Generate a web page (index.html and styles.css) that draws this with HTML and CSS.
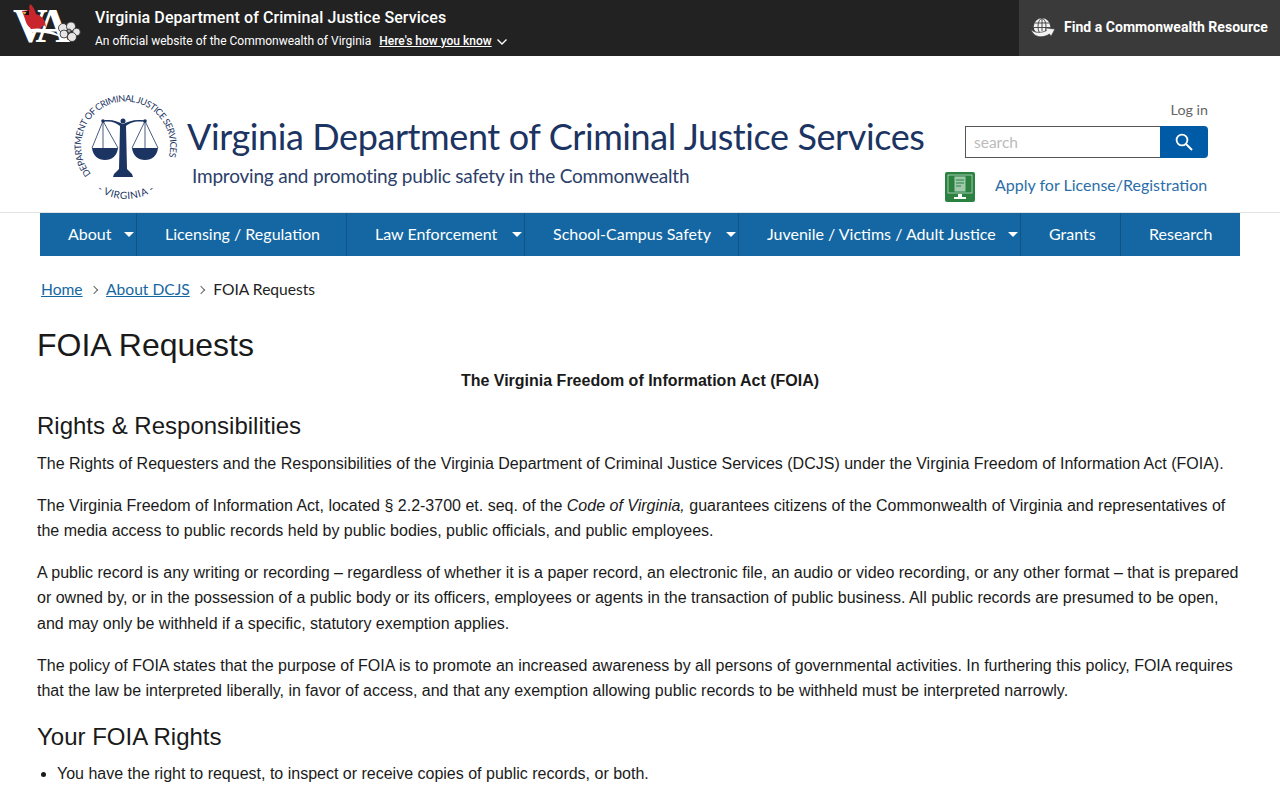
FILE: index.html
```html
<!DOCTYPE html>
<html lang="en">
<head>
<meta charset="utf-8">
<title>FOIA Requests</title>
<link rel="stylesheet" href="styles.css">
</head>
<body>
<div class="topbar">
  <div class="topbar-left">
    <svg class="va-logo" width="72" height="56" viewBox="0 0 72 56">
      <text x="3" y="42" class="va-text">VA</text>
      <path d="M20 4 C19 7 19 8 20 10 L12 11 L15 19 C16 24 19 28 24 30 C28 30.500 31 28 34 25 L36 27 L35 22 C33 17 29 15 26 14 C25 10 23 6 20 4 Z" fill="#c9252c"/>
      <path d="M13 12 L19 10.500 L19 15 L15 15 Z" fill="#111"/>
      <path d="M12 12 L16.500 12 L15 14.500 Z" fill="#e2b23a"/>
      <path d="M15 31 C28 26 41 29 55 39 C42 33 30 31 15 33 Z" fill="#fff"/>
      <g fill="#e6e6e6" stroke="#2a2a2a" stroke-width=".8">
        <circle cx="53" cy="28" r="4.500"/>
        <circle cx="61" cy="26.500" r="4.500"/>
        <circle cx="66.500" cy="32" r="3.800"/>
        <circle cx="62" cy="37" r="4.500"/>
        <circle cx="54" cy="34" r="4"/>
        <circle cx="59" cy="31" r="2" fill="#999"/>
      </g>
    </svg>
    <div class="topbar-text">
      <div class="agency">Virginia Department of Criminal Justice Services</div>
      <div class="official">An official website of the Commonwealth of Virginia <a class="know" href="#">Here's how you know</a>
        <svg class="chev" width="12" height="8" viewBox="0 0 12 8"><path d="M1.5 1.5 L6 6 L10.5 1.5" fill="none" stroke="#fff" stroke-width="1.4"/></svg>
      </div>
    </div>
  </div>
  <a class="resource" href="#">
    <svg width="24" height="20" viewBox="0 0 24 20">
      <circle cx="11" cy="8.500" r="8.300" fill="#f2f2f2"/>
      <g fill="none" stroke="#3a3a3a" stroke-width=".9">
        <ellipse cx="11" cy="8.500" rx="4" ry="8"/>
        <path d="M11 .5 V13 M3.500 5 H18.500 M3 9.500 H19"/>
      </g>
      <path d="M0 11 C3 15.500 11 15 15.500 12.500 L14.500 10 L24 11 L20 18.500 L18.500 16 C12 20.500 2 20 0 11 Z" fill="#f2f2f2" stroke="#3a3a3a" stroke-width=".7"/>
    </svg>
    <span>Find a Commonwealth Resource</span>
  </a>
</div>

<header class="site-header">
  <div class="brand">
    <svg class="seal" width="112" height="114" viewBox="0 0 112 114">
      <defs>
        <path id="sealTop" d="M21 81 A44.500 44.500 0 1 1 91 80"/>
        <path id="sealBottom" d="M26 96.500 A52 52 0 0 0 86 96.500"/>
      </defs>
      <text class="seal-text seal-ring"><textPath href="#sealTop">DEPARTMENT OF CRIMINAL JUSTICE SERVICES</textPath></text>
      <text class="seal-text seal-mid"><textPath href="#sealBottom" startOffset="50%">- VIRGINIA -</textPath></text>
      <g fill="#1c3462">
        <path d="M33 27.500 C41 26 47 28 53 31 C59 28 65 26 75 27.500 L75 29 C65 27.500 60 30 56 33 L57 76 L62 81 L63 84 L43 84 L44 81 L49 76 L50 33 C46 30 41 27.500 33 29 Z"/>
        <circle cx="53" cy="28" r="2.500"/>
        <circle cx="33" cy="28" r="1.800"/><circle cx="75" cy="28" r="1.800"/>
        <path d="M22 55 H48 C47 63 42 67 35 67 C28 67 23 63 22 55 Z"/>
        <path d="M62 55 H88 C87 63 82 67 75 67 C68 67 63 63 62 55 Z"/>
      </g>
      <g stroke="#1c3462" stroke-width=".8" fill="none">
        <path d="M33 28 L22 55 M33 28 L48 55 M33 28 V55 M75 28 L62 55 M75 28 L88 55 M75 28 V55"/>
      </g>
    </svg>
    <div class="brand-text">
      <div class="brand-title">Virginia Department of Criminal Justice Services</div>
      <div class="brand-sub">Improving and promoting public safety in the Commonwealth</div>
    </div>
  </div>
  <div class="tools">
    <a class="login" href="#">Log in</a>
    <form class="search">
      <input class="search-input" type="text" placeholder="search">
      <button class="search-btn" type="button" aria-label="Search">
        <svg width="18" height="18" viewBox="0 0 18 18"><circle cx="7" cy="7" r="5.4" fill="none" stroke="#fff" stroke-width="1.8"/><path d="M11 11 L17 17" stroke="#fff" stroke-width="2"/></svg>
      </button>
    </form>
    <div class="apply">
      <svg class="apply-icon" width="30" height="30" viewBox="0 0 30 30">
        <rect width="30" height="30" rx="2" fill="#2a8140"/>
        <rect x="3" y="3" width="24" height="18" fill="#2a8140" stroke="#d5e8da" stroke-width=".7"/>
        <rect x="9.500" y="4.500" width="11" height="15" fill="#9fc9aa"/>
        <path d="M11 8 H19 M11 11 H19 M11 14 H16" stroke="#2a8140" stroke-width="1.200"/>
        <path d="M13 22 H17 V25 H21 V27 H9 V25 H13 Z" fill="#fff"/>
      </svg>
      <a href="#">Apply for License/Registration</a>
    </div>
  </div>
</header>

<nav class="nav">
  <a class="nav-item w-about has-caret" href="#">About</a>
  <a class="nav-item w-lic" href="#">Licensing / Regulation</a>
  <a class="nav-item w-law has-caret" href="#">Law Enforcement</a>
  <a class="nav-item w-school has-caret" href="#">School-Campus Safety</a>
  <a class="nav-item w-juv has-caret" href="#">Juvenile / Victims / Adult Justice</a>
  <a class="nav-item w-grants" href="#">Grants</a>
  <a class="nav-item w-research" href="#">Research</a>
</nav>

<div class="crumbs">
  <a href="#">Home</a><span class="sep"></span><a href="#">About DCJS</a><span class="sep"></span><span>FOIA Requests</span>
</div>

<main class="content">
  <h1>FOIA Requests</h1>
  <p class="center"><strong>The Virginia Freedom of Information Act (FOIA)</strong></p>
  <h2>Rights &amp; Responsibilities</h2>
  <p>The Rights of Requesters and the Responsibilities of the Virginia Department of Criminal Justice Services (DCJS) under the Virginia Freedom of Information Act (FOIA).</p>
  <p>The Virginia Freedom of Information Act, located § 2.2-3700 et. seq. of the <em>Code of Virginia,</em> guarantees citizens of the Commonwealth of Virginia and representatives of the media access to public records held by public bodies, public officials, and public employees.</p>
  <p>A public record is any writing or recording – regardless of whether it is a paper record, an electronic file, an audio or video recording, or any other format – that is prepared or owned by, or in the possession of a public body or its officers, employees or agents in the transaction of public business. All public records are presumed to be open, and may only be withheld if a specific, statutory exemption applies.</p>
  <p>The policy of FOIA states that the purpose of FOIA is to promote an increased awareness by all persons of governmental activities. In furthering this policy, FOIA requires that the law be interpreted liberally, in favor of access, and that any exemption allowing public records to be withheld must be interpreted narrowly.</p>
  <h2>Your FOIA Rights</h2>
  <ul>
    <li>You have the right to request, to inspect or receive copies of public records, or both.</li>
  </ul>
</main>
</body>
</html>
```
FILE: styles.css
```css
* { box-sizing: border-box; }
html, body { margin: 0; padding: 0; }
body { background: #fff; color: #1a1a1a; font-family: "Liberation Sans", Arial, sans-serif; font-size: 16px; line-height: 25.6px; overflow: hidden; height: 800px; }

.topbar { height: 56px; background: #222; display: flex; justify-content: space-between; color: #fff; font-family: Roboto, sans-serif; }
.topbar-left { display: flex; align-items: center; padding-left: 10px; }
.va-logo { margin-right: 13px; display: block; }
.va-text { font-family: "Liberation Serif", serif; font-weight: 700; font-size: 48px; fill: #fff; letter-spacing: -6px; }
.agency { font-size: 16px; font-weight: 500; line-height: 20px; letter-spacing: .08px; }
.official { font-size: 12px; line-height: 16px; margin-top: 5px; display: flex; align-items: center; white-space: pre; }
.know { color: #fff; font-weight: 500; text-decoration: underline; margin-left: 5px; }
.chev { margin-left: 4px; margin-top: 3px; }
.resource { width: 261px; background: #3a3a3a; color: #fff; text-decoration: none; display: flex; align-items: center; padding-left: 12px; gap: 9px; font-size: 14px; font-weight: 700; letter-spacing: .03px; }

.site-header { height: 157px; border-bottom: 1px solid #e3e3e3; display: flex; justify-content: space-between; }
.brand { display: flex; padding: 37px 0 0 70px; }
.seal { display: block; flex: none; }
.seal-text { font-family: Lato, sans-serif; fill: #1c3462; }
.seal-ring { font-size: 9.200px; letter-spacing: -.55px; }
.seal-mid { font-size: 10px; text-anchor: middle; letter-spacing: .5px; }
.brand-text { margin-left: 5px; padding-top: 20px; color: #1c3462; font-family: Lato, sans-serif; }
.brand-title { font-size: 36px; line-height: 46px; white-space: nowrap; letter-spacing: -.4px; }
.brand-sub { font-size: 19px; line-height: 26px; margin-left: 5px; margin-top: 4px; white-space: nowrap; letter-spacing: -.2px; color: #2c4069; }

.tools { width: 243px; flex: none; padding: 44px 0 0 0; margin-right: 72px; display: flex; flex-direction: column; align-items: flex-end; font-family: Lato, sans-serif; }
.login { font-size: 14.300px; line-height: 20px; color: #666; text-decoration: none; }
.search { display: flex; width: 243px; height: 32px; margin-top: 6px; }
.search-input { flex: 1; min-width: 0; height: 32px; border: 1px solid #555; border-right: 0; padding: 0 8px; font-family: Lato, sans-serif; font-size: 15.500px; outline: 0; }
.search-input::placeholder { color: #bbb; }
.search-btn { width: 48px; height: 32px; border: 0; padding: 0; background: #005ba6; border-radius: 0 4px 4px 0; display: flex; align-items: center; justify-content: center; }
.apply { width: 263px; flex: none; margin-top: 14px; display: flex; align-items: center; gap: 20px; }
.apply-icon { flex: none; }
.apply a { color: #2c6ea8; text-decoration: none; font-size: 16px; white-space: nowrap; padding-bottom: 4px; }

.nav { margin: 0 40px; height: 43px; background: #1467a2; display: flex; font-family: Lato, sans-serif; font-size: 16px; }
.nav-item { position: relative; color: #fff; text-decoration: none; display: flex; align-items: center; padding: 0 0 2px 28px; border-right: 1px solid #0f5486; white-space: nowrap; }
.nav-item:last-child { border-right: 0; }
.has-caret::after { content: ""; position: absolute; right: 2px; top: 19px; border-left: 5px solid transparent; border-right: 5px solid transparent; border-top: 5px solid #fff; }
.w-about { width: 97px; }
.w-lic { width: 210px; }
.w-law { width: 178px; }
.w-school { width: 214px; }
.w-juv { width: 282px; }
.w-grants { width: 100px; }
.w-research { width: 119px; }

.crumbs { margin: 20px 0 0 41px; height: 26px; font-family: Lato, sans-serif; font-size: 15.600px; line-height: 26px; color: #222; display: flex; align-items: center; }
.crumbs a { color: #1467a2; }
.sep { width: 6px; height: 6px; margin: 1px 9.500px 0 8px; border-top: 1px solid #666; border-right: 1px solid #666; transform: rotate(45deg); }

.content { padding: 0 37px; margin-top: 24px; }
h1 { font-size: 32px; font-weight: 400; line-height: 38px; margin: 0 0 5px; color: #1a1a1a; }
h2 { font-size: 24px; font-weight: 400; line-height: 29px; margin: 18.600px 0 11.400px; color: #1a1a1a; }
p { margin: 0 0 16px; }
.center { text-align: center; line-height: 23px; }
ul { margin: -2px 0 0; padding-left: 20px; }
```
